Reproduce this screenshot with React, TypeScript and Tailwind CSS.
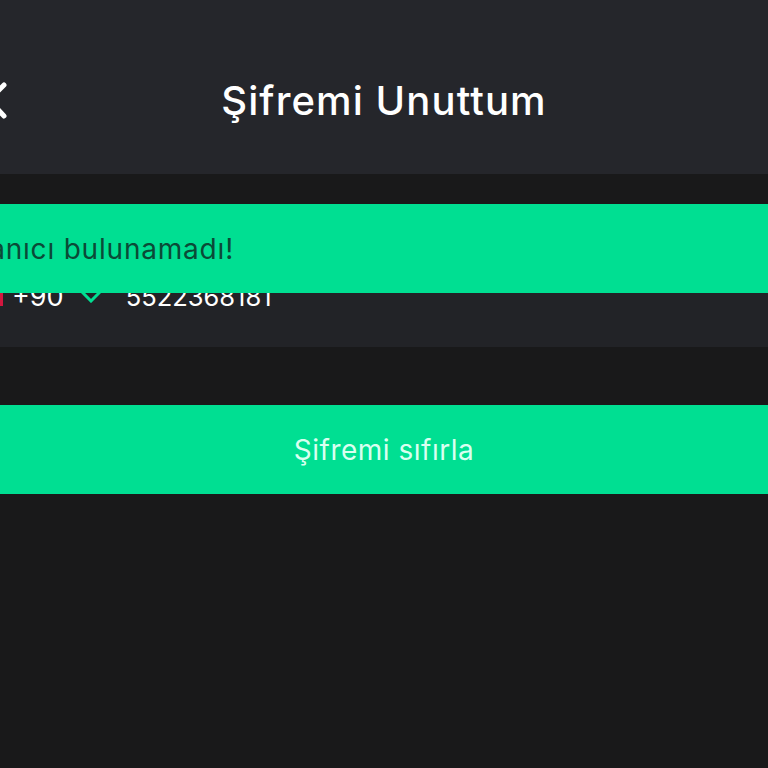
import React from 'react';

const App: React.FC = () => {
  return (
    <div className="relative w-[768px] h-[768px] overflow-hidden bg-[#19191a] font-['Inter',sans-serif]">
      {/* Header */}
      <div className="relative flex items-center justify-center h-[174px] pt-[28px] bg-[#25262b]">
        <div className="absolute left-[-22px] top-[81px]">
          <svg width="38" height="38" viewBox="0 0 38 38" fill="none" stroke="#ffffff" strokeWidth="5" strokeLinecap="round" strokeLinejoin="round">
            <path d="M26 4 L11 19 L26 35" />
          </svg>
        </div>
        <h1 className="text-[40px] font-medium text-white leading-none tracking-[1.1px]">Şifremi Unuttum</h1>
      </div>

      {/* Form */}
      <div className="pt-[73px]">
        <div className="flex items-center h-[100px] bg-[#222327] pl-[12px] text-white text-[27px]">
          <span>+90</span>
          <svg className="ml-[17px]" width="20" height="12" viewBox="0 0 20 12" fill="none" stroke="#00df92" strokeWidth="3">
            <path d="M1 1 L10 10 L19 1" />
          </svg>
          <span className="ml-[25px] text-[25.5px]">5522368181</span>
        </div>
        <div className="mt-[58px] flex items-center justify-center h-[89px] bg-[#00df92] text-[#d9fff0] text-[28px] tracking-[0.5px]">
          Şifremi sıfırla
        </div>
      </div>

      {/* Flag edge */}
      <div className="absolute left-0 top-[288px] w-[3px] h-[18px] bg-[#d3173f]" />

      {/* Toast */}
      <div className="absolute left-0 right-0 top-[204px] h-[89px] flex items-center bg-[#00df92] overflow-hidden">
        <div className="w-[234px] shrink-0 flex justify-end">
          <span className="shrink-0 whitespace-nowrap text-[28px] tracking-[0.8px] text-[#0b4a37]">Kullanıcı bulunamadı!</span>
        </div>
      </div>
    </div>
  );
};

export default App;
